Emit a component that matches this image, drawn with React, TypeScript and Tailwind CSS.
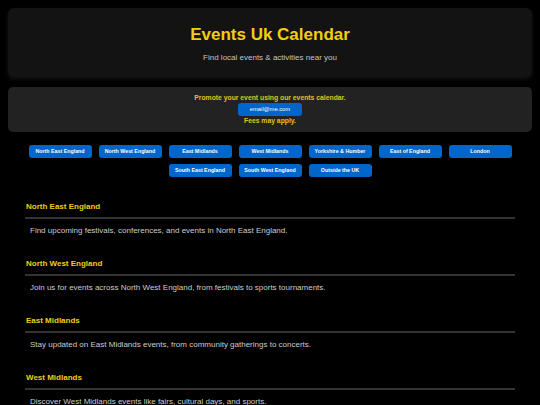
import React from 'react';

const regions = [
  'North East England',
  'North West England',
  'East Midlands',
  'West Midlands',
  'Yorkshire & Humber',
  'East of England',
  'London',
  'South East England',
  'South West England',
  'Outside the UK',
];

const sections = [
  { title: 'North East England', text: 'Find upcoming festivals, conferences, and events in North East England.' },
  { title: 'North West England', text: 'Join us for events across North West England, from festivals to sports tournaments.' },
  { title: 'East Midlands', text: 'Stay updated on East Midlands events, from community gatherings to concerts.' },
  { title: 'West Midlands', text: 'Discover West Midlands events like fairs, cultural days, and sports.' },
  { title: 'Yorkshire & Humber', text: 'Explore shows, markets and festivals happening across Yorkshire & Humber.' },
  { title: 'East of England', text: 'See what is on in the East of England, from food fairs to live music.' },
  { title: 'London', text: 'The best of London events, exhibitions, theatre and nightlife.' },
];

const App = () => {
  return (
    <div className="min-h-screen bg-black text-white font-['Liberation_Sans',Arial,sans-serif] pt-[8px] pb-10">
      <header className="mx-[8px] h-[69px] rounded-[6px] bg-[#131313] shadow-[0_2px_4px_rgba(255,255,255,0.08)] flex flex-col items-center pt-[17px]">
        <h1 className="text-[17px] leading-[20px] font-bold text-[#f2cd12]">Events Uk Calendar</h1>
        <p className="mt-[8px] text-[8px] leading-[10px] text-[#c4c4c4]">Find local events &amp; activities near you</p>
      </header>

      <div className="mx-[8px] mt-[10px] h-[45px] rounded-[5px] bg-[#222222] flex flex-col items-center pt-[6px]">
        <p className="text-[6.8px] leading-[9px] font-bold text-[#e0c21a]">Promote your event using our events calendar.</p>
        <a className="mt-[1px] w-[64px] h-[13px] rounded-[3px] bg-[#0066cc] text-white text-[5.8px] flex items-center justify-center">
          email@me.com
        </a>
        <p className="text-[6.8px] leading-[9px] font-bold text-[#e0c21a]">Fees may apply.</p>
      </div>

      <nav className="mt-[13px] mx-auto w-[490px] flex flex-wrap justify-center gap-x-[7px] gap-y-[6px]">
        {regions.map((r) => (
          <button
            key={r}
            className="w-[63px] h-[13px] rounded-[3px] bg-[#0066cc] text-white text-[5.3px] font-bold flex items-center justify-center"
          >
            {r}
          </button>
        ))}
      </nav>

      <main className="mx-[25px] mt-[25px] flex flex-col gap-[23px]">
        {sections.map((s) => (
          <section key={s.title}>
            <h2 className="text-[8px] leading-[10px] font-bold text-[#f2cd12] pl-px">{s.title}</h2>
            <div className="mt-[5px] h-[2px] bg-[#333333]" />
            <p className="mt-[7px] pl-[5px] text-[8px] leading-[10px] text-[#cccccc]">{s.text}</p>
          </section>
        ))}
      </main>
    </div>
  );
};

export default App;
